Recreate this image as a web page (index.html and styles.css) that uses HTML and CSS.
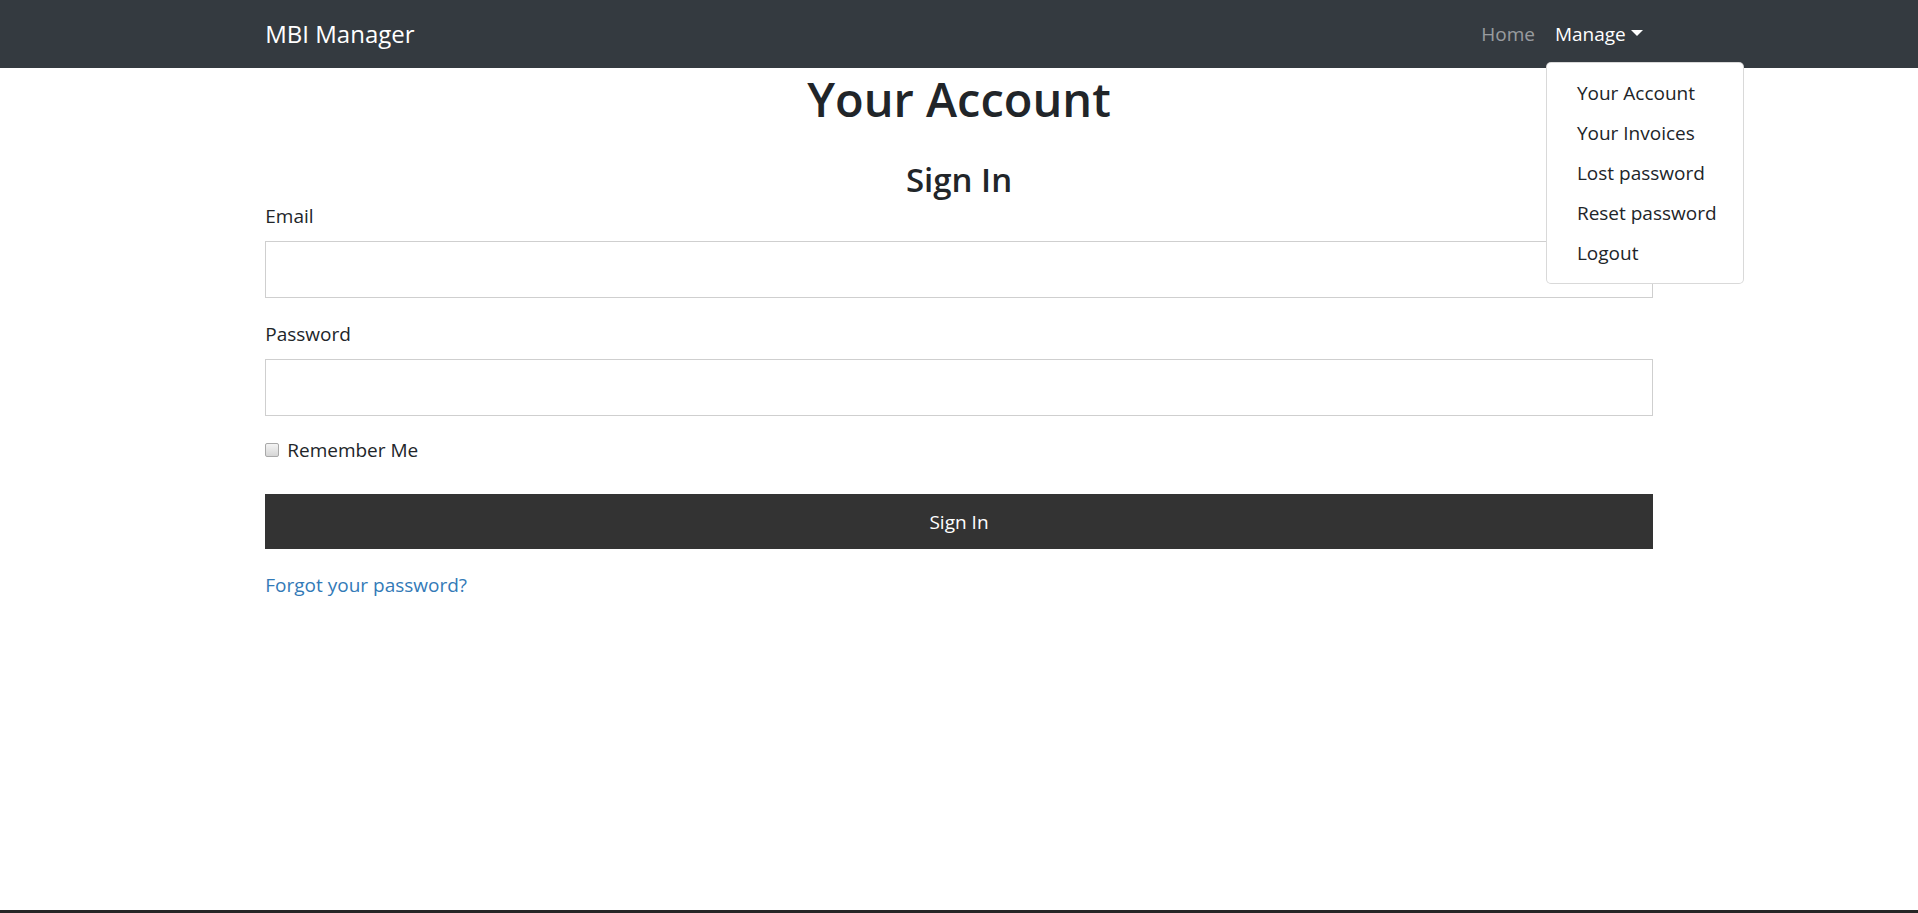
FILE: index.html
```html
<!DOCTYPE html>
<html lang="en">
<head>
<meta charset="utf-8">
<title>Your Account - MBI Manager</title>
<link rel="stylesheet" href="styles.css">
</head>
<body>
<div class="page">
  <nav class="navbar">
    <div class="container navbar-inner">
      <a class="brand" href="#">MBI Manager</a>
      <ul class="nav">
        <li class="nav-item"><a class="nav-link muted" href="#">Home</a></li>
        <li class="nav-item dropdown">
          <a class="nav-link active" href="#">Manage<span class="caret"></span></a>
          <div class="dropdown-menu">
            <a class="dropdown-item" href="#">Your Account</a>
            <a class="dropdown-item" href="#">Your Invoices</a>
            <a class="dropdown-item" href="#">Lost password</a>
            <a class="dropdown-item" href="#">Reset password</a>
            <a class="dropdown-item" href="#">Logout</a>
          </div>
        </li>
      </ul>
    </div>
  </nav>
  <main class="main">
    <div class="container">
      <h1 class="title">Your Account</h1>
      <h2 class="subtitle">Sign In</h2>
      <form class="form">
        <div class="form-group">
          <label class="label" for="email">Email</label>
          <input class="input" id="email" type="email">
        </div>
        <div class="form-group last">
          <label class="label" for="password">Password</label>
          <input class="input" id="password" type="password">
        </div>
        <div class="check-row">
          <input class="check" id="remember" type="checkbox">
          <label class="check-label" for="remember">Remember Me</label>
        </div>
        <button class="btn" type="button">Sign In</button>
        <p class="forgot"><a href="#">Forgot your password?</a></p>
      </form>
    </div>
  </main>
  <div class="bottom-edge"></div>
</div>
</body>
</html>
```

FILE: styles.css
```css
* { box-sizing: border-box; }
html, body { margin: 0; padding: 0; }
body {
  font-family: "Open Sans", "Noto Sans", "Liberation Sans", sans-serif;
  font-size: 19px;
  line-height: 30px;
  color: #212529;
  background: #fff;
}
a { text-decoration: none; }
.page {
  min-height: 100vh;
  display: flex;
  flex-direction: column;
}
.container {
  max-width: 1425px;
  margin: 0 auto;
  padding: 0 18.75px;
  width: 100%;
}
.navbar {
  background: #343a40;
  height: 68px;
}
.navbar-inner {
  display: flex;
  align-items: center;
  height: 68px;
}
.brand {
  color: #fff;
  font-size: 24px;
  line-height: 30px;
}
.nav {
  list-style: none;
  margin: 0 0 0 auto;
  padding: 0;
  display: flex;
}
.nav-item { position: relative; }
.nav-link {
  display: flex;
  align-items: center;
  padding: 10px;
  line-height: 30px;
  font-size: 19px;
}
.nav-link.muted { color: rgba(255,255,255,.5); }
.nav-link.active { color: #fff; }
.caret {
  display: inline-block;
  margin-left: 5px;
  width: 0;
  height: 0;
  border-top: 6px solid #fff;
  border-left: 6px solid transparent;
  border-right: 6px solid transparent;
  margin-top: -3px;
}
.dropdown-menu {
  position: absolute;
  top: 100%;
  left: 1px;
  margin-top: 3px;
  width: 198px;
  padding: 10px 0;
  background: #fff;
  border: 1px solid rgba(0,0,0,.15);
  border-radius: 5px;
  z-index: 10;
}
.dropdown-item {
  display: block;
  padding: 5px 30px;
  line-height: 30px;
  color: #212529;
  white-space: nowrap;
}
.main { flex: 1; }
.title {
  margin: 0 0 34px;
  padding-top: 0;
  text-align: center;
  font-size: 47px;
  font-weight: 600;
  line-height: 62px;
}
.subtitle {
  margin: 0 0 5px;
  text-align: center;
  font-size: 33px;
  font-weight: 600;
  line-height: 32px;
}
.form { margin: 0; }
.form-group { margin-bottom: 21px; }
.form-group.last { margin-bottom: 19px; }
.label {
  display: block;
  margin-bottom: 10px;
}
.input {
  display: block;
  width: 100%;
  height: 57px;
  border: 1px solid #cfcfcf;
  border-radius: 0;
  padding: 6px 12px;
  font: inherit;
}
.check-row {
  display: flex;
  align-items: center;
  margin-bottom: 29px;
}
.check {
  appearance: none;
  -webkit-appearance: none;
  width: 14px;
  height: 14px;
  margin: 0 8px 0 0;
  border: 1px solid #a9a9a9;
  border-radius: 2px;
  background: linear-gradient(#f4f4f4, #d6d6d6);
}
.btn {
  display: block;
  width: 100%;
  height: 55px;
  border: 0;
  border-radius: 0;
  background: #333;
  color: #fff;
  font: inherit;
  margin-bottom: 21px;
}
.forgot { margin: 0; }
.forgot a { color: #337ab7; }
.bottom-edge {
  height: 3px;
  background: #262626;
}
```
